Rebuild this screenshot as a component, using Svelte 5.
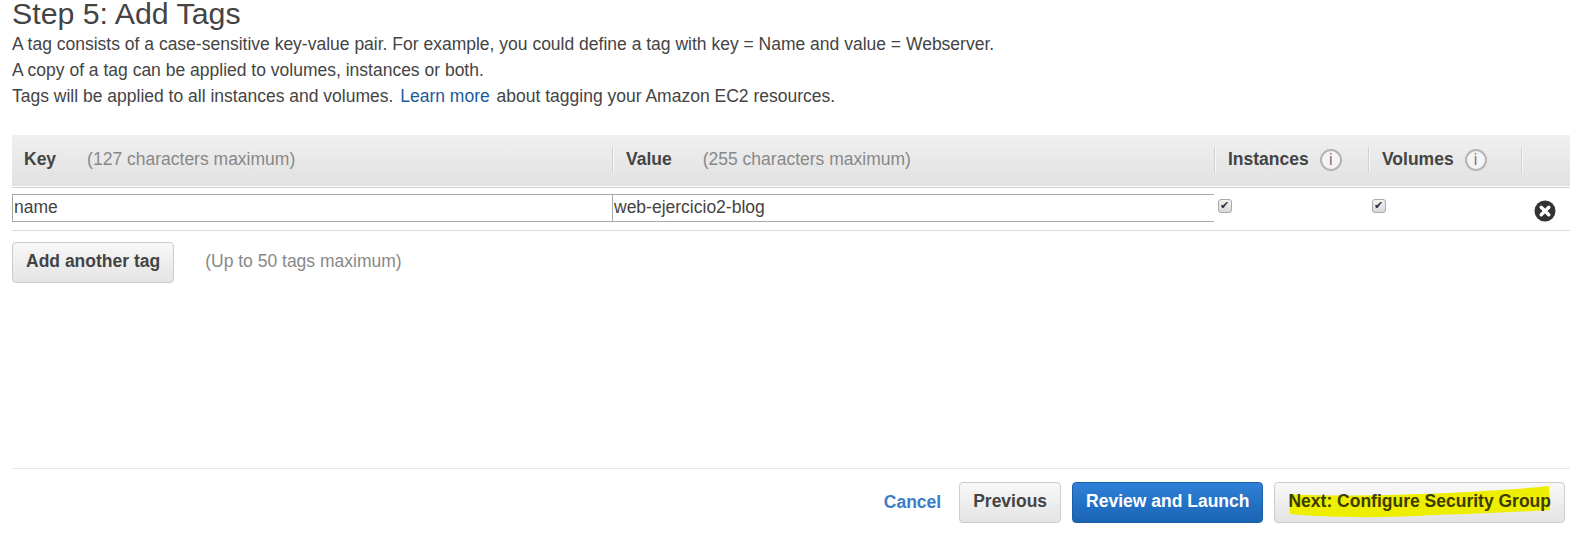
<script>
  let keyName = 'name';
  let tagValue = 'web-ejercicio2-blog';
</script>

<div class="page">
  <h1>Step 5: Add Tags</h1>
  <div class="intro">
    <p>A tag consists of a case-sensitive key-value pair. For example, you could define a tag with key = Name and value = Webserver.</p>
    <p>A copy of a tag can be applied to volumes, instances or both.</p>
    <p>Tags will be applied to all instances and volumes. <a href="#learn" class="learn">Learn more</a> about tagging your Amazon EC2 resources.</p>
  </div>

  <div class="table">
    <div class="row head">
      <div class="th"><b>Key</b><span class="hint">(127 characters maximum)</span></div>
      <div class="th sep"><b>Value</b><span class="hint">(255 characters maximum)</span></div>
      <div class="th sep"><b>Instances</b><i class="info">i</i></div>
      <div class="th sep"><b>Volumes</b><i class="info">i</i></div>
      <div class="th sep"></div>
    </div>
    <div class="row body">
      <input class="cell-input" bind:value={keyName} />
      <input class="cell-input" bind:value={tagValue} />
      <div class="check-cell"><input type="checkbox" checked /></div>
      <div class="check-cell"><input type="checkbox" checked /></div>
      <div class="remove-cell">
        <svg width="22" height="22" viewBox="0 0 22 22">
          <circle cx="11" cy="11" r="10.5" fill="#333" />
          <path d="M7.2 7.2l7.6 7.6M14.8 7.2l-7.6 7.6" stroke="#fff" stroke-width="3.4" stroke-linecap="round" />
        </svg>
      </div>
    </div>
  </div>

  <div class="add-row">
    <button class="btn">Add another tag</button>
    <span class="hint">(Up to 50 tags maximum)</span>
  </div>

  <div class="footer">
    <a href="#cancel" class="cancel">Cancel</a>
    <button class="btn">Previous</button>
    <button class="btn primary">Review and Launch</button>
    <button class="btn next">
      <svg class="marker" viewBox="0 0 262 32" preserveAspectRatio="none">
        <path d="M1 8 C50 11 110 9 160 7 C195 5 235 3 261 0 L262 24 C225 26 195 28 145 29 C100 32 45 32 2 28 Z" fill="#eeee00" />
      </svg>
      <span class="next-label">Next: Configure Security Group</span>
    </button>
  </div>
</div>

<style>
  :global(body) {
    margin: 0;
    background: #fff;
  }

  .page {
    width: 1577px;
    height: 546px;
    overflow: hidden;
    box-sizing: border-box;
    padding: 0 7px 0 12px;
    font-family: "Liberation Sans", Arial, sans-serif;
    font-size: 17.5px;
    color: #444;
  }

  h1 {
    margin: 0;
    height: 31px;
    line-height: 28px;
    font-size: 30.3px;
    font-weight: 400;
    color: #444;
  }

  .intro {
    height: 104px;
  }

  .intro p {
    margin: 0;
    line-height: 26px;
  }

  .learn {
    color: #1c5a9e;
    text-decoration: none;
    margin: 0 2px;
  }

  .row {
    display: grid;
    grid-template-columns: 600px 602px 154px 153px 49px;
  }

  .head {
    height: 51px;
    background: linear-gradient(#f0f0f0, #e1e1e1);
    box-shadow: 0 1px 0 #fff, 0 2px 0 #d0d0d0;
  }

  .th {
    display: flex;
    align-items: center;
    padding: 0 0 2px 12px;
    position: relative;
  }

  .sep {
    padding-left: 14px;
  }

  .sep::before {
    content: '';
    position: absolute;
    left: 0;
    top: 12px;
    bottom: 13px;
    width: 1px;
    background: #d0d0d0;
    box-shadow: 1px 0 0 #f8f8f8;
  }

  .hint {
    color: #888;
  }

  .th .hint {
    margin-left: 31px;
  }

  .info {
    margin-left: 11px;
    width: 22px;
    height: 22px;
    box-sizing: border-box;
    border: 2px solid #b4b4b4;
    border-radius: 50%;
    background: #f4f4f4;
    color: #777;
    font: 400 16px/18px "Liberation Sans", Arial, sans-serif;
    text-align: center;
  }

  .body {
    height: 45px;
    padding-top: 8px;
    box-sizing: border-box;
    border-bottom: 1px solid #ddd;
    align-items: start;
  }

  .cell-input {
    box-sizing: border-box;
    width: 100%;
    height: 28px;
    padding: 0 1px 2px;
    border: 1px solid #a9a9a9;
    border-right: none;
    outline: none;
    font: 17.5px "Liberation Sans", Arial, sans-serif;
    color: #444;
    background: #fff;
  }

  .check-cell {
    padding: 5px 0 0 4px;
  }

  .check-cell input {
    appearance: none;
    position: relative;
    display: block;
    margin: 0;
    width: 14px;
    height: 14px;
    box-sizing: border-box;
    border: 1px solid #aaa;
    border-radius: 3px;
    background: linear-gradient(#f2f2f2, #d8d8d8);
  }

  .check-cell input:checked::after {
    content: '✔';
    position: absolute;
    left: 1px;
    top: -1px;
    font: 11px/14px "DejaVu Sans", sans-serif;
    color: #333;
  }

  .remove-cell {
    display: flex;
    justify-content: center;
    padding: 6px 2px 0 0;
  }

  .add-row {
    display: flex;
    align-items: flex-start;
    gap: 31px;
    padding-top: 11px;
    height: 238px;
    box-sizing: border-box;
    border-bottom: 1px solid #e8e8e8;
  }

  .add-row .hint {
    line-height: 38px;
  }

  .btn {
    height: 41px;
    box-sizing: border-box;
    padding: 0 13px 2px;
    border: 1px solid #ccc;
    border-radius: 4px;
    background: linear-gradient(#f8f8f8, #e4e4e4);
    color: #444;
    font: bold 17.5px "Liberation Sans", Arial, sans-serif;
    cursor: pointer;
  }

  .footer {
    display: flex;
    justify-content: flex-end;
    align-items: center;
    padding: 13px 5px 0 0;
    gap: 11px;
  }

  .cancel {
    color: #3b7cc9;
    font-weight: 700;
    text-decoration: none;
    margin-right: 7px;
  }

  .primary {
    background: linear-gradient(#2f80d8, #1a64b4);
    border-color: #1a5fa8;
    color: #fff;
  }

  .next {
    position: relative;
  }

  .marker {
    position: absolute;
    left: 13px;
    top: 3px;
    width: 262px;
    height: 32px;
  }

  .next-label {
    position: relative;
    color: #3c3c00;
  }
</style>
